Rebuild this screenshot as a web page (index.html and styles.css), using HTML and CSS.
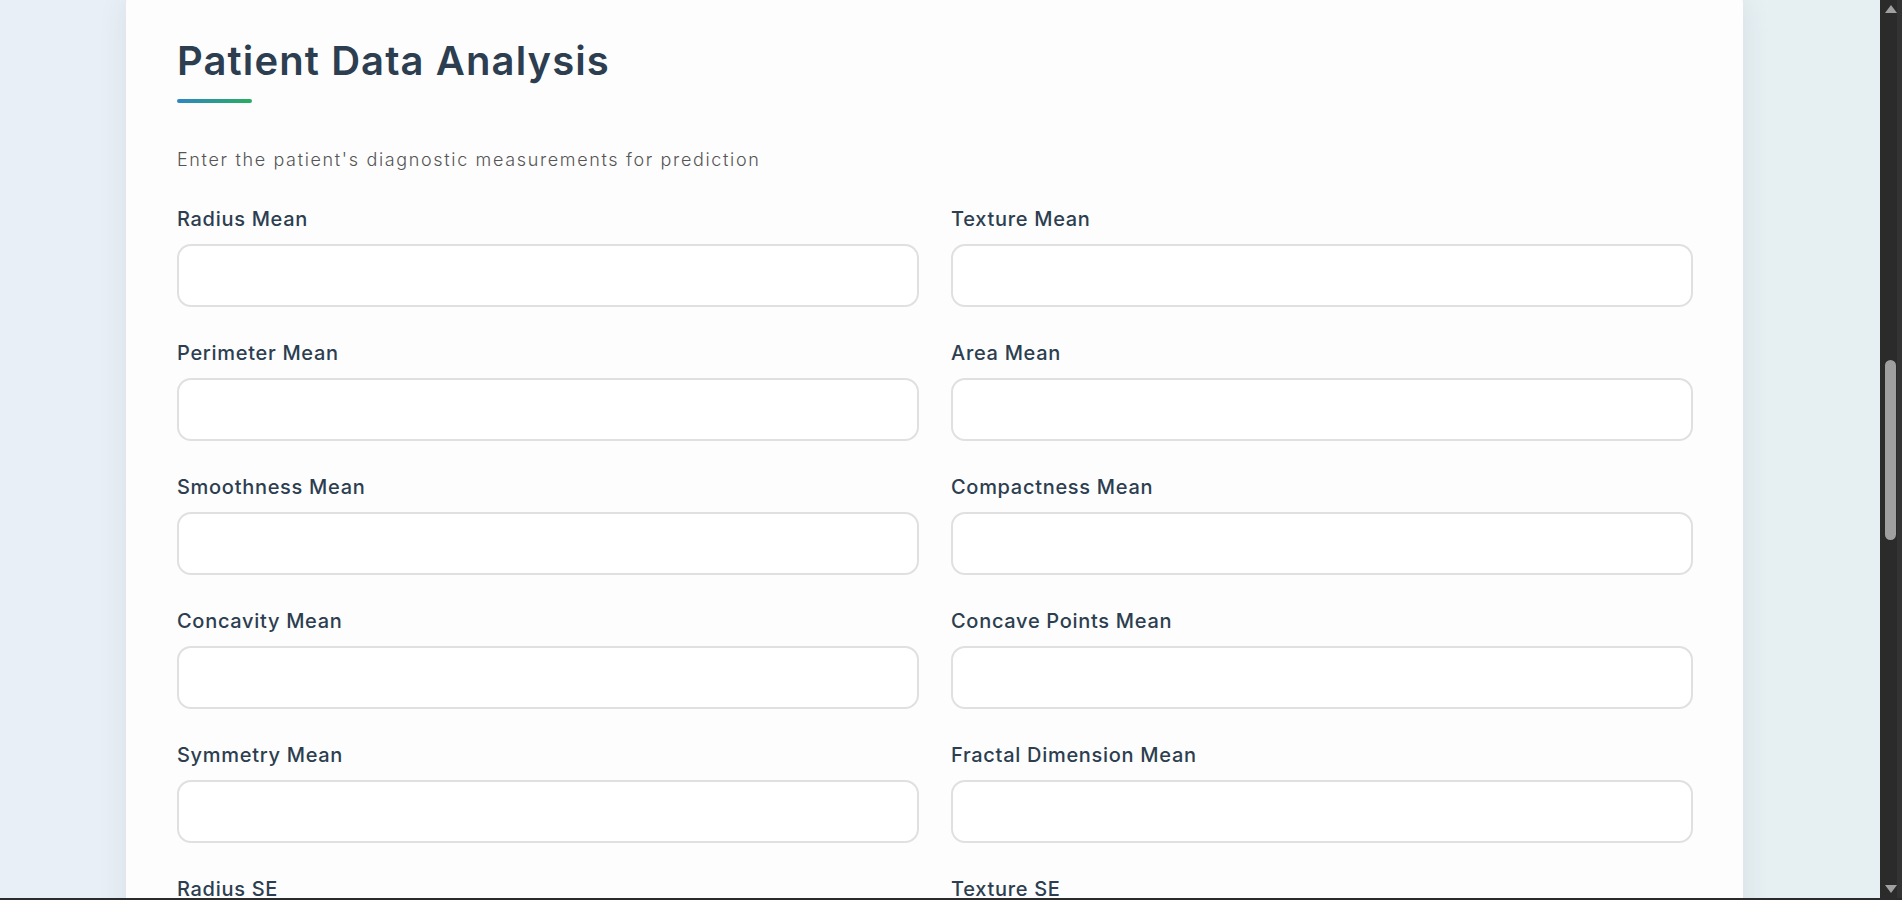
FILE: index.html
```html
<!DOCTYPE html>
<html lang="en">
<head>
<meta charset="utf-8">
<title>Patient Data Analysis</title>
<link rel="stylesheet" href="styles.css">
</head>
<body>
<div class="window">
  <div class="viewport">
    <main class="page">
      <section class="card">
        <h1 class="title">Patient Data Analysis</h1>
        <div class="title-bar"></div>
        <p class="subtitle">Enter the patient's diagnostic measurements for prediction</p>
        <form class="form-grid">
          <div class="field"><label class="field-label">Radius Mean</label><input class="field-input" type="text"></div>
          <div class="field"><label class="field-label">Texture Mean</label><input class="field-input" type="text"></div>
          <div class="field"><label class="field-label">Perimeter Mean</label><input class="field-input" type="text"></div>
          <div class="field"><label class="field-label">Area Mean</label><input class="field-input" type="text"></div>
          <div class="field"><label class="field-label">Smoothness Mean</label><input class="field-input" type="text"></div>
          <div class="field"><label class="field-label">Compactness Mean</label><input class="field-input" type="text"></div>
          <div class="field"><label class="field-label">Concavity Mean</label><input class="field-input" type="text"></div>
          <div class="field"><label class="field-label">Concave Points Mean</label><input class="field-input" type="text"></div>
          <div class="field"><label class="field-label">Symmetry Mean</label><input class="field-input" type="text"></div>
          <div class="field"><label class="field-label">Fractal Dimension Mean</label><input class="field-input" type="text"></div>
          <div class="field"><label class="field-label">Radius SE</label><input class="field-input" type="text"></div>
          <div class="field"><label class="field-label">Texture SE</label><input class="field-input" type="text"></div>
        </form>
      </section>
    </main>
    <div class="vscroll">
      <div class="arrow arrow-up"></div>
      <div class="track"><div class="thumb"></div></div>
      <div class="arrow arrow-down"></div>
    </div>
  </div>
  <div class="hstrip"></div>
</div>
</body>
</html>
```
FILE: styles.css
```css
* { box-sizing: border-box; }
html, body {
  margin: 0;
  padding: 0;
  height: 100%;
  overflow: hidden;
}
body {
  font-family: "Inter", "Open Sans", sans-serif;
  color: #2c3e50;
}
.window {
  display: flex;
  flex-direction: column;
  height: 900px;
  width: 1902px;
}
.viewport {
  display: flex;
  flex: 1;
  min-height: 0;
}
.page {
  flex: 1;
  min-width: 0;
  overflow: hidden;
  background: linear-gradient(90deg, #e9eff6 0%, #e8eff4 50%, #e6f0f3 100%);
}
.card {
  width: 1617px;
  margin: -16px 0 0 126px;
  padding: 53px 50px 40px 51px;
  background: #fdfdfd;
  border-radius: 20px;
  box-shadow: 0 10px 30px rgba(44, 62, 80, 0.09);
}
.title {
  margin: 0;
  font-size: 40px;
  line-height: 48px;
  font-weight: 600;
  color: #2c3e50;
  letter-spacing: 1.1px;
}
.title-bar {
  width: 75px;
  height: 4px;
  margin-top: 14px;
  border-radius: 2px;
  background: linear-gradient(90deg, #2e86c1, #27ae60);
}
.subtitle {
  margin: 44px 0 0;
  font-size: 18px;
  line-height: 25px;
  font-weight: 300;
  color: #555;
  letter-spacing: 1.65px;
}
.form-grid {
  display: grid;
  grid-template-columns: 1fr 1fr;
  column-gap: 32px;
  row-gap: 33px;
  margin-top: 34px;
}
.field {
  display: flex;
  flex-direction: column;
}
.field-label {
  display: block;
  font-size: 20px;
  line-height: 26px;
  font-weight: 500;
  color: #2c3e50;
  letter-spacing: 0.7px;
  margin-bottom: 12px;
}
.field-input {
  display: block;
  width: 100%;
  height: 63px;
  border: 2px solid #e0e0e0;
  border-radius: 14px;
  background: #fff;
  font-family: inherit;
  font-size: 16px;
  padding: 0 16px;
  outline: none;
}
.vscroll {
  width: 22px;
  background: #2b2b2b;
  border-right: 5px solid #333;
  display: flex;
  flex-direction: column;
  align-items: center;
}
.arrow {
  width: 0;
  height: 0;
  border-left: 6px solid transparent;
  border-right: 6px solid transparent;
  margin-left: 4px;
}
.arrow-up {
  margin-top: 5px;
  border-bottom: 8px solid #a0a0a0;
}
.arrow-down {
  margin-bottom: 5px;
  border-top: 8px solid #a0a0a0;
}
.track {
  flex: 1;
  width: 100%;
  padding-top: 347px;
  display: flex;
  justify-content: center;
}
.thumb {
  width: 11px;
  height: 180px;
  margin-left: 4px;
  border-radius: 6px;
  background: #9f9f9f;
}
.hstrip {
  height: 2px;
  background: #2b2b2b;
}
```
